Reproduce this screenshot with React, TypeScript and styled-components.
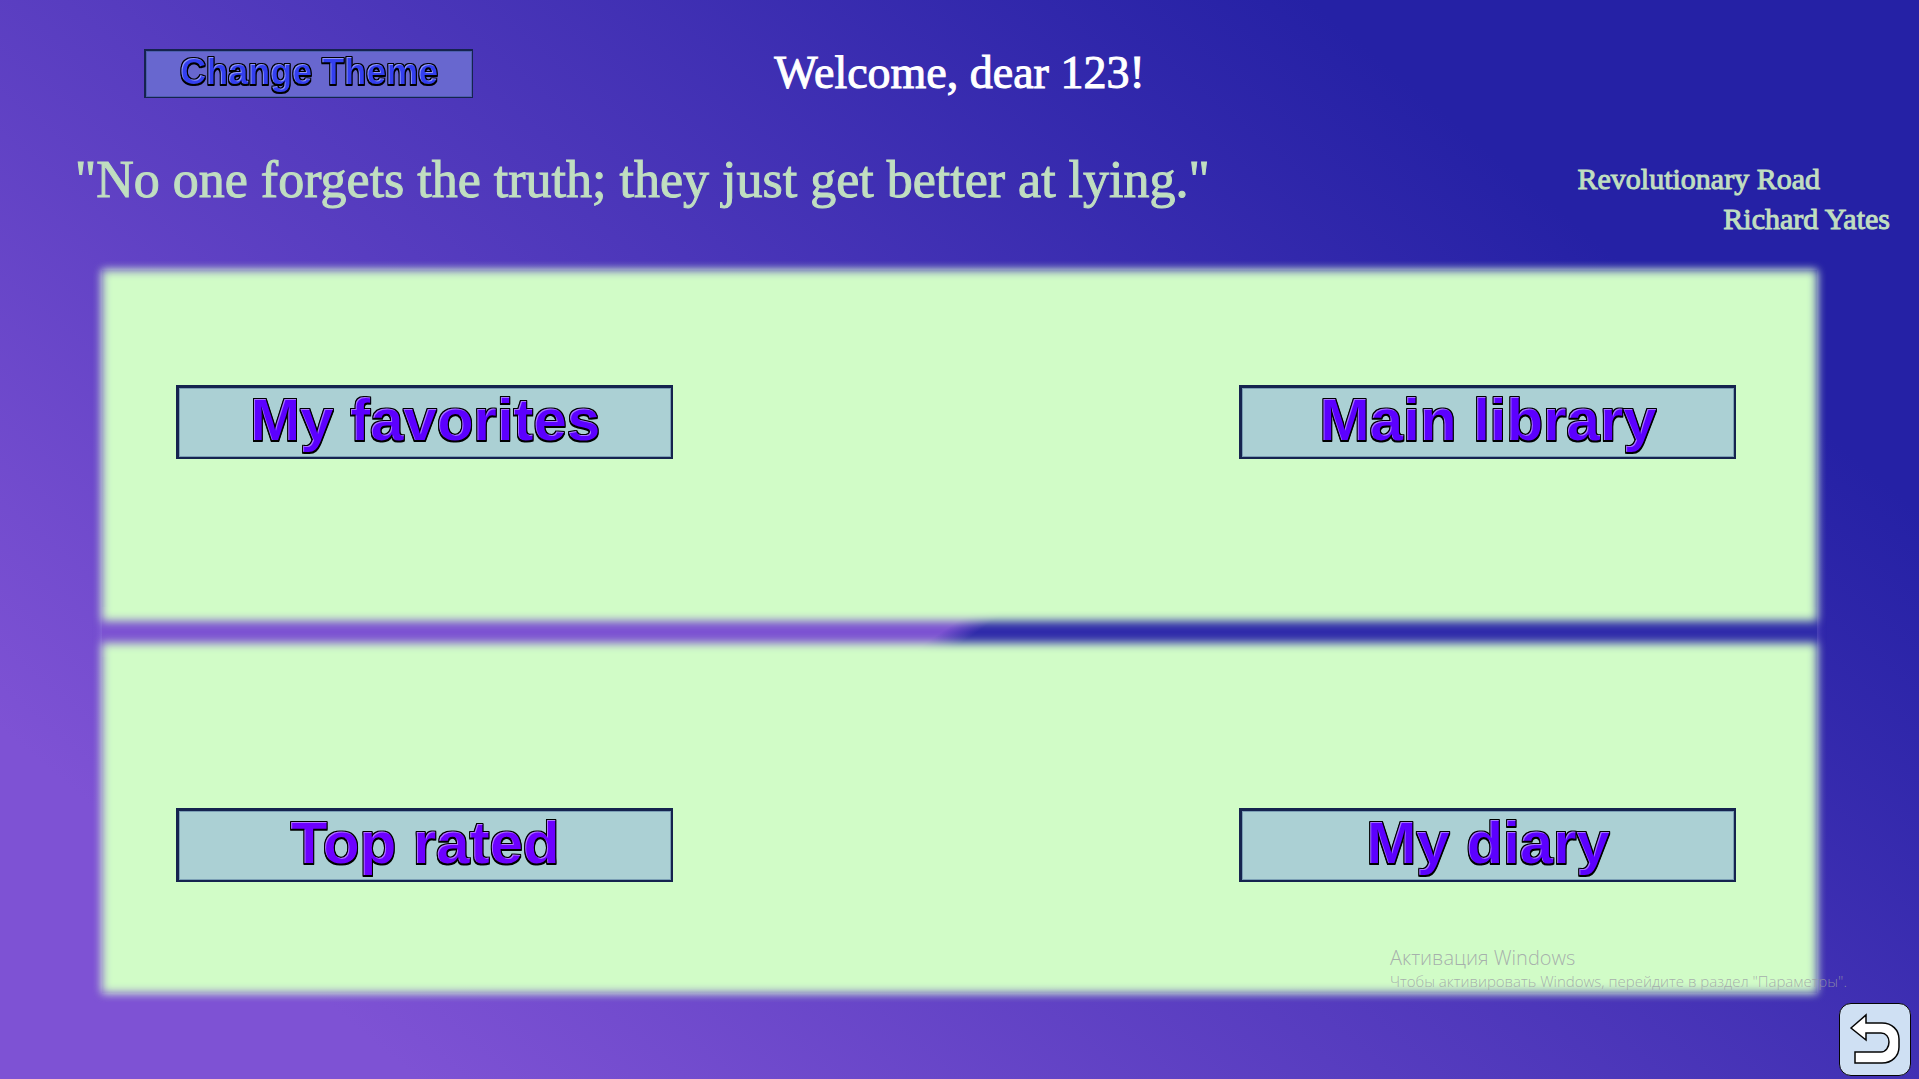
import React from "react";
import styled, { createGlobalStyle } from "styled-components";

const GlobalStyle = createGlobalStyle`
  *, *::before, *::after { box-sizing: border-box; }
  html, body, #root { min-height: 100vh; }
  body { margin: 0; font-family: "Liberation Serif", "Times New Roman", serif; }
  h1, p { margin: 0; }
`;

const Page = styled.div`
  position: relative;
  display: flex;
  flex-direction: column;
  min-height: 100vh;
  overflow: hidden;
  background: linear-gradient(40deg, #7e52d4 13%, #2521a5 81%);
`;

const Header = styled.header`
  display: grid;
  grid-template-columns: 1fr auto 1fr;
  align-items: center;
  height: 146px;
`;

const Button = styled.button`
  display: flex;
  justify-content: center;
  align-items: flex-start;
  padding: 0;
  border: 3px solid #15234f;
  border-width: 3px 2px 2px 3px;
  font-family: "Liberation Sans", Arial, sans-serif;
  font-weight: 700;
  cursor: pointer;
`;

const ThemeButton = styled(Button)`
  justify-self: start;
  width: 329px;
  height: 49px;
  margin-left: 144px;
  border-width: 2px 1px 1px 2px;
  background: #6867cf;
  box-shadow: inset 0 0 0 1px #4e5fae;
  color: #333ff0;
  font-size: 36px;
  line-height: 42px;
`;

const Embossed = styled.span`
  filter: url(#emboss);
`;

const FilterDefs = styled.svg`
  position: absolute;
`;

const Welcome = styled.h1`
  font-size: 46px;
  line-height: 56px;
  font-weight: 400;
  color: #fff;
  -webkit-text-stroke: 1px #fff;
`;

const QuoteRow = styled.section`
  display: flex;
  justify-content: space-between;
  height: 124px;
  padding: 4px 29px 0 75px;
  color: #c0dec0;
  -webkit-text-stroke: 1px #c0dec0;
`;

const Quote = styled.p`
  font-size: 52px;
  line-height: 60px;
`;

const Source = styled.div`
  display: flex;
  flex-direction: column;
  padding-top: 9px;
  font-size: 30px;
  line-height: 40px;
`;

const BookTitle = styled.p`
  padding-right: 70px;
`;

const Author = styled.p`
  align-self: flex-end;
`;

const Shelves = styled.main`
  position: relative;
  z-index: 0;
  display: grid;
  grid-template-rows: 1fr 1fr;
  gap: 22px;
  flex: 1;
  margin: 0 102px 86px;
  background: linear-gradient(145deg, #7c52d2 49%, #2f2baa 51%) center / 100%
    50px no-repeat;
  box-shadow: 0 0 8px rgba(205, 190, 255, 0.35);
`;

const Shelf = styled.section`
  position: relative;
  display: flex;
  align-items: flex-start;
  justify-content: space-between;
  padding: 115px 81px 0 74px;

  &::before {
    content: "";
    position: absolute;
    inset: 0;
    z-index: -1;
    background: #d1fcc7;
    filter: blur(5px);
  }

  & + & {
    padding-top: 165px;
  }
`;

const ShelfButton = styled(Button)<{ $tone?: string }>`
  width: 497px;
  height: 74px;
  background: #abd0d4;
  box-shadow: inset 0 0 0 1px #7b9fb5;
  color: ${({ $tone }) => $tone ?? "#5c00ff"};
  font-size: 60px;
  line-height: 64px;
`;

const Watermark = styled.aside`
  position: absolute;
  z-index: 1;
  right: 72px;
  bottom: 88px;
  color: rgba(155, 155, 165, 0.8);
  font-family: "Open Sans", "Noto Sans", sans-serif;
  font-weight: 300;
  font-size: 15px;
  line-height: 20px;
`;

const WatermarkTitle = styled.p`
  font-size: 20px;
  line-height: 26px;
`;

const BackButton = styled.button`
  position: absolute;
  right: 8px;
  bottom: 3px;
  width: 72px;
  height: 73px;
  padding: 0;
  border: 1px solid #050505;
  border-radius: 12px;
  background: #cfe0f3;
  cursor: pointer;
`;

export default function App() {
  return (
    <Page>
      <GlobalStyle />
      <FilterDefs width="0" height="0" aria-hidden="true">
        <filter id="emboss" x="-5%" y="-10%" width="110%" height="120%" colorInterpolationFilters="sRGB">
          <feMorphology in="SourceAlpha" operator="dilate" radius="1" result="edge" />
          <feOffset in="edge" dx="0" dy="1" result="edgeShadow" />
          <feOffset in="SourceAlpha" dx="1" dy="1" result="inner" />
          <feComposite in="SourceAlpha" in2="inner" operator="out" result="rim" />
          <feFlood floodColor="#ffffff" floodOpacity="0.45" result="light" />
          <feComposite in="light" in2="rim" operator="in" result="highlight" />
          <feMerge>
            <feMergeNode in="edgeShadow" />
            <feMergeNode in="edge" />
            <feMergeNode in="SourceGraphic" />
            <feMergeNode in="highlight" />
          </feMerge>
        </filter>
      </FilterDefs>
      <Header>
        <ThemeButton>
          <Embossed>Change Theme</Embossed>
        </ThemeButton>
        <Welcome>Welcome, dear 123!</Welcome>
      </Header>
      <QuoteRow>
        <Quote>"No one forgets the truth; they just get better at lying."</Quote>
        <Source>
          <BookTitle>Revolutionary Road</BookTitle>
          <Author>Richard Yates</Author>
        </Source>
      </QuoteRow>
      <Shelves>
        <Shelf>
          <ShelfButton>
            <Embossed>My favorites</Embossed>
          </ShelfButton>
          <ShelfButton>
            <Embossed>Main library</Embossed>
          </ShelfButton>
        </Shelf>
        <Shelf>
          <ShelfButton $tone="#6d00ff">
            <Embossed>Top rated</Embossed>
          </ShelfButton>
          <ShelfButton>
            <Embossed>My diary</Embossed>
          </ShelfButton>
        </Shelf>
      </Shelves>
      <Watermark>
        <WatermarkTitle>Активация Windows</WatermarkTitle>
        <p>Чтобы активировать Windows, перейдите в раздел "Параметры".</p>
      </Watermark>
      <BackButton aria-label="Back">
        <svg width="70" height="71" viewBox="0 0 70 71" aria-hidden="true">
          <path
            d="M11 24 26 11V19H42C52 19 59 26 59 35V43C59 52 52 59 42 59H15V48H41C46 48 49 43 49 38C49 33 46 29 41 29H26V36Z"
            fill="#fff"
            stroke="#050505"
            strokeWidth="1.5"
          />
        </svg>
      </BackButton>
    </Page>
  );
}
